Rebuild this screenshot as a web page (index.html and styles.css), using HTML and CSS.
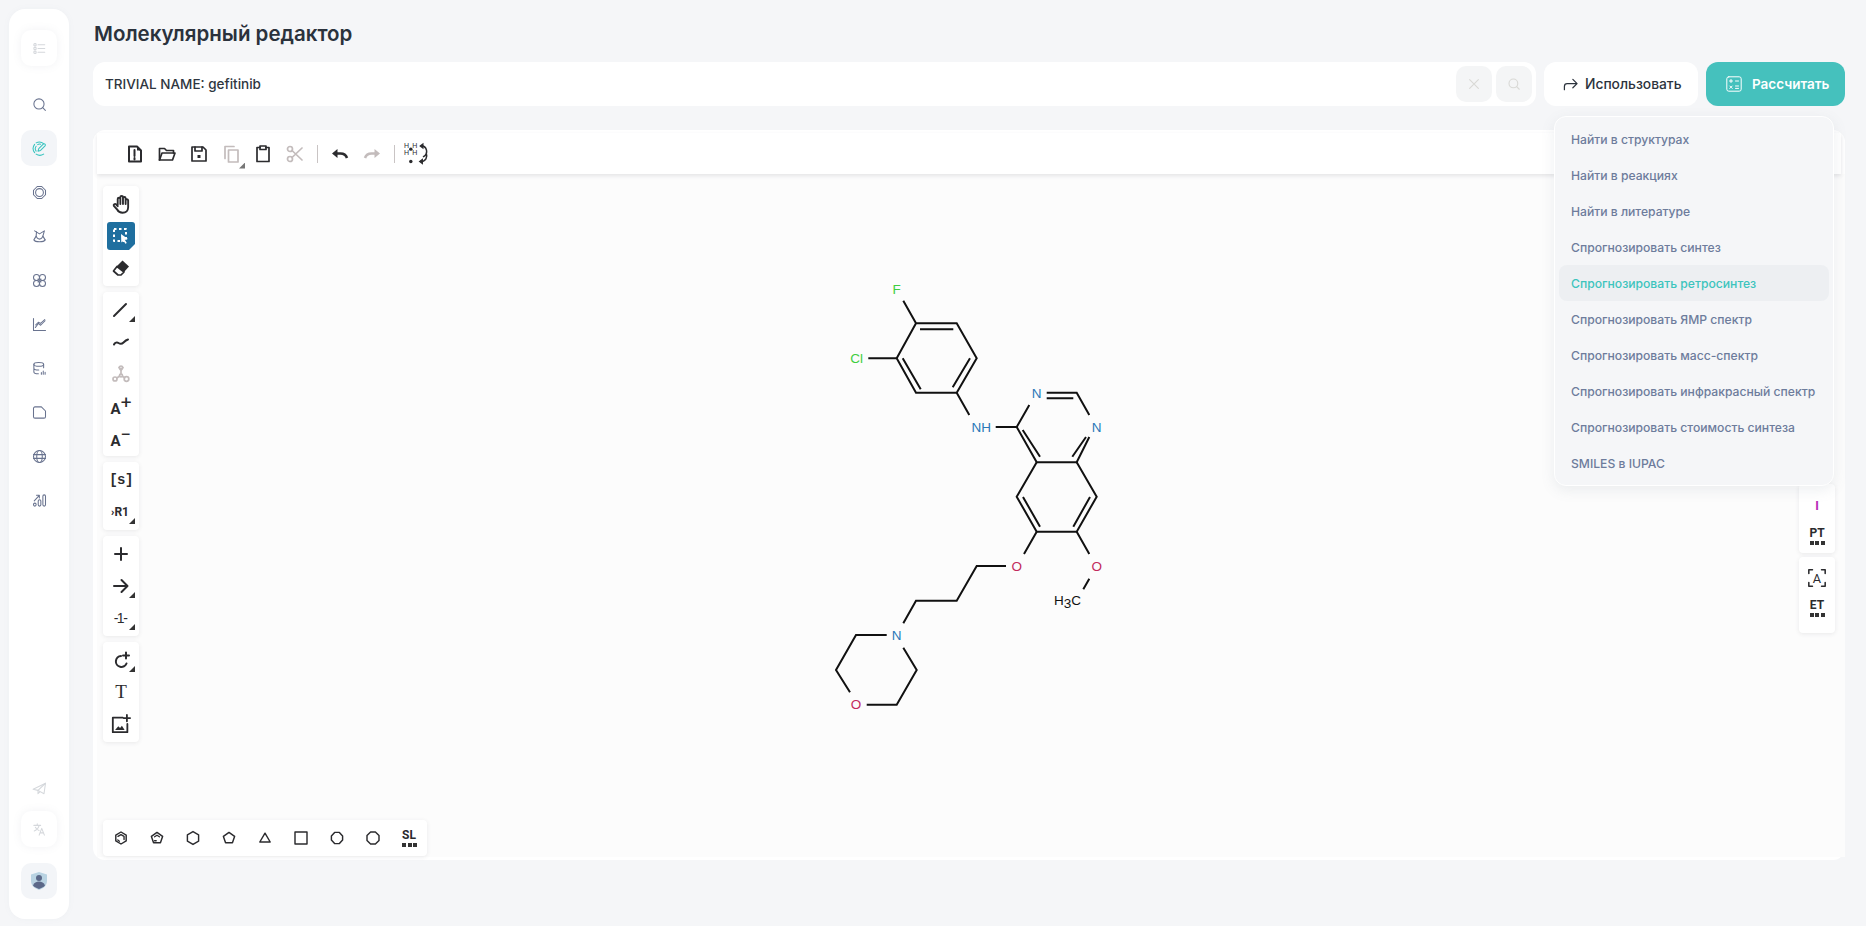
FILE: index.html
```html
<!DOCTYPE html>
<html lang="ru">
<head>
<meta charset="utf-8">
<title>Молекулярный редактор</title>
<link rel="stylesheet" href="styles.css">
</head>
<body>
<div class="app">
  <nav class="sidebar">
    <button class="nav-btn raised faded">
      <svg viewBox="0 0 20 20"><path d="M8 5h9M8 10h9M8 15h9"/><rect x="2.500" y="3.500" width="3" height="3" rx="1"/><rect x="2.500" y="8.500" width="3" height="3" rx="1"/><rect x="2.500" y="13.500" width="3" height="3" rx="1"/></svg>
    </button>
    <div class="nav-list">
      <button class="nav-btn"><svg viewBox="0 0 20 20"><circle cx="9.300" cy="9.300" r="6.800"/><path d="M14.300 14.300l3.500 3.500"/></svg></button>
      <button class="nav-btn active"><svg viewBox="0 0 20 20"><path d="M15.500 3.500A9 9 0 0 0 5.500 2.500M3.500 4.500a9 9 0 0 0 0 11M5.500 17.500a9 9 0 0 0 10 0M5.500 7a5.500 5.500 0 0 0 0 6.500M7.500 4.800a5.500 5.500 0 0 1 4-.5"/><path d="M8 13.500l1-3.300 6-6a1.700 1.700 0 0 1 2.400 2.400l-6 6z"/></svg></button>
      <button class="nav-btn"><svg viewBox="0 0 20 20"><path d="M7 2h6l5 5v6l-5 5H7l-5-5V7z"/><circle cx="10" cy="10" r="5.200"/></svg></button>
      <button class="nav-btn"><svg viewBox="0 0 20 20"><path d="M3.500 2.500l6.500 4 6.500-4-2 7 3 5"/><path d="M6 3.800L5.500 9.500 2.500 14.500c2 3.500 13 3.500 15 0"/><path d="M5.500 9.500c1 2.500 3 4 4.500 4s3.500-1.500 4.500-4"/></svg></button>
      <button class="nav-btn"><svg viewBox="0 0 20 20"><circle cx="6" cy="6" r="4"/><circle cx="14" cy="6" r="4"/><circle cx="6" cy="14" r="4"/><circle cx="14" cy="14" r="4"/><path d="M8 8l4 4M12 8l-4 4"/></svg></button>
      <button class="nav-btn"><svg viewBox="0 0 20 20"><path d="M2 2v16h16"/><path d="M4.500 14l4-5.500 3 2.500L17.500 5"/><path d="M5 10.500l3.500-3.500 3 1.500L17 3.500"/></svg></button>
      <button class="nav-btn"><svg viewBox="0 0 20 20"><ellipse cx="9" cy="4.500" rx="6.500" ry="2.500"/><path d="M2.500 4.500v10c0 1.400 2.500 2.500 6 2.500M15.500 4.500V9M2.500 9.500c0 1.400 2.500 2.500 6.500 2.500"/><path d="M12.500 17.500v-2M15 17.500v-4M17.500 17.500v-2.500"/></svg></button>
      <button class="nav-btn"><svg viewBox="0 0 20 20"><path d="M12.500 2.500H4a2 2 0 0 0-2 2v11a2 2 0 0 0 2 2h12a2 2 0 0 0 2-2V8z"/></svg></button>
      <button class="nav-btn"><svg viewBox="0 0 20 20"><circle cx="10" cy="10" r="8"/><ellipse cx="10" cy="10" rx="3.700" ry="8"/><path d="M2 7.500h16M2 12.500h16"/></svg></button>
      <button class="nav-btn"><svg viewBox="0 0 20 20"><rect x="14.500" y="2.500" width="3.500" height="15" rx="1.700"/><rect x="8.300" y="9" width="3.500" height="8.500" rx="1.700"/><rect x="2" y="13.500" width="3.500" height="4" rx="1.700"/><path d="M3 10.500L9.500 3.500M6 3h3.800v3.500"/></svg></button>
    </div>
    <div class="nav-foot">
      <button class="nav-btn faded"><svg viewBox="0 0 20 20"><path d="M1.500 11L18 3l-2 14-8-4.500zM8 12.500V17l2.500-2.500"/><path d="M8 12.500L18 3"/></svg></button>
      <button class="nav-btn raised faded"><svg viewBox="0 0 20 20"><path d="M2.500 4.500h9M7 2.500v2M9.500 4.500c-.800 3.500-3 6-6.500 7.500M4.500 7c1 2 3 3.500 5 4.500M9.500 17.500l3.500-9 3.500 9M11 14.500h4.500"/></svg></button>
      <button class="nav-btn soft">
        <svg class="avatar" viewBox="0 0 20 20"><path class="shield" d="M10 1l8 2.500V10c0 4.500-3.500 7.500-8 9-4.500-1.500-8-4.500-8-9V3.500z"/><circle class="person" cx="10" cy="7" r="3"/><path class="person" d="M4 14.500c1-3 3.500-4 6-4s5 1 6 4c-1.500 1.700-3.500 2.700-6 3.500-2.500-.800-4.500-1.800-6-3.500z"/></svg>
      </button>
    </div>
  </nav>

  <main class="main">
    <h1 class="title">Молекулярный редактор</h1>
    <div class="search-row">
      <div class="search-box">
        <span class="query">TRIVIAL NAME: gefitinib</span>
        <button class="square-btn"><svg viewBox="0 0 16 16"><path d="M3 3l10 10M13 3L3 13"/></svg></button>
        <button class="square-btn"><svg viewBox="0 0 16 16"><circle cx="7.300" cy="7.300" r="5"/><path d="M11 11l3 3"/></svg></button>
      </div>
      <button class="action use">
        <svg viewBox="0 0 16 16"><path d="M1.500 13.500V10a3 3 0 0 1 3-3h10M10.500 2.500l4.500 4.500-4.500 4.500"/></svg>
        Использовать
      </button>
      <div class="calc-wrap">
        <button class="action calc">
          <svg viewBox="0 0 16 16"><rect x=".8" y=".8" width="14.400" height="14.400" rx="2"/><path d="M3.500 5h3M5 3.500v3M9.500 5h3M3.800 10l2.400 2.400M6.200 10l-2.400 2.400M9.500 10h3M9.500 12.400h3"/></svg>
          Рассчитать
        </button>
        <ul class="menu">
          <li class="menu-item">Найти в структурах</li>
          <li class="menu-item">Найти в реакциях</li>
          <li class="menu-item">Найти в литературе</li>
          <li class="menu-item">Спрогнозировать синтез</li>
          <li class="menu-item current">Спрогнозировать ретросинтез</li>
          <li class="menu-item">Спрогнозировать ЯМР спектр</li>
          <li class="menu-item">Спрогнозировать масс-спектр</li>
          <li class="menu-item">Спрогнозировать инфракрасный спектр</li>
          <li class="menu-item">Спрогнозировать стоимость синтеза</li>
          <li class="menu-item">SMILES в IUPAC</li>
        </ul>
      </div>
    </div>

    <section class="editor">
      <div class="topbar">
        <button class="tool"><svg viewBox="0 0 20 20"><path class="bold" d="M4 2.500h8l4 4v11H4z"/><path class="bold" d="M9.500 6v6M9.500 14v1.500"/><path class="fill" d="M12 2.500l4 4h-4z"/></svg></button>
        <button class="tool"><svg viewBox="0 0 20 20"><path d="M2.500 16V4.500h5l2 2h7V9"/><path d="M2.500 16l2.500-7h13l-2.500 7z"/></svg></button>
        <button class="tool"><svg viewBox="0 0 20 20"><path d="M3 3h11l3 3v11H3z"/><path d="M6 3v4h7V3"/><path class="fill" d="M8.500 11h3v3h-3z"/></svg></button>
        <button class="tool off"><svg viewBox="0 0 20 20"><path d="M7.500 6h9.500v12H7.500z"/><path d="M4 14.500V2.500h9"/></svg><i class="tri"></i></button>
        <button class="tool"><svg viewBox="0 0 20 20"><path d="M7 3.500H4v14h12v-14h-3"/><path d="M7 2h6v3.500H7z"/></svg></button>
        <button class="tool off"><svg viewBox="0 0 20 20"><circle cx="5" cy="5" r="2.500"/><circle cx="5" cy="15" r="2.500"/><path d="M7 6.500L17 16M7 13.500L17 4"/></svg></button>
        <span class="sep"></span>
        <button class="tool"><svg viewBox="0 0 20 20"><path class="heavy" d="M17 14c-1-3-3.500-4.500-6.500-4.500H5"/><path class="fill" d="M7.500 5v9L2 9.500z"/></svg></button>
        <button class="tool off"><svg viewBox="0 0 20 20"><path class="heavy" d="M3 14c1-3 3.500-4.500 6.500-4.500H15"/><path class="fill" d="M12.500 5v9L18 9.500z"/></svg></button>
        <span class="sep"></span>
        <button class="tool wide">
          <svg viewBox="0 0 24 24"><g class="mini"><text x="0" y="6">H</text><text x="7.500" y="6">H</text><text x="0" y="13">H</text><text x="7.500" y="13">H</text></g><circle class="fill" cx="6.300" cy="7.500" r="1.600"/><circle class="fill" cx="6.300" cy="19" r="1.600"/><path d="M16 4.500c5 0 7 7 2 10M15.500 19c4.500 0 6.500-4 5-8"/><path class="fill" d="M14 4.500l4-3v6zM13.500 19l4-3v6z"/></svg>
        </button>
      </div>

      <div class="canvas">
        <svg class="molecule" viewBox="820 270 300 450">
          <g class="bonds">
            <path d="M903.300 300.700L916 323.300H956.700L976.700 358.300L956.700 392.700H916L896.700 358.300L916 323.300"/>
            <path d="M920 329.300H953.300M902.700 358.300L920.700 389.300M952.700 387.300L970 358.300M868.300 358.300H896.700M956.700 392.700L969.300 415"/>
            <path d="M995.700 427H1016.700L1029.300 405M1046.700 392.700H1076.700L1089.300 415M1046.700 398.300H1073.300M1089.300 437L1076.700 462.300H1036.700L1016.700 427M1022.700 430L1040 456.700M1072.300 456.700L1086 437"/>
            <path d="M1036.700 462.300L1016.700 496.700L1036.700 531.700H1076.700L1096.700 496.700L1076.700 462.300M1023 497L1040 526.700M1090 497L1073.300 526.700"/>
            <path d="M1036.700 531.700L1024 554M1076.700 531.700L1089.300 554M1089.300 578.700L1083.300 589.300"/>
            <path d="M1006 566H976.700L956.700 600.700H916L903.300 623.300M886.700 635H856L836 670L850 692.300M866.700 704.700H896.700L916.700 670L903.300 647.700"/>
          </g>
          <g class="atoms">
            <text class="halo" x="896.700" y="294">F</text>
            <text class="halo" x="856.700" y="363">Cl</text>
            <text class="nitro" x="981.300" y="432">NH</text>
            <text class="nitro" x="1036.700" y="398">N</text>
            <text class="nitro" x="1096.700" y="432">N</text>
            <text class="oxy" x="1016.700" y="571">O</text>
            <text class="oxy" x="1096.700" y="571">O</text>
            <text class="nitro" x="896.700" y="640">N</text>
            <text class="oxy" x="856" y="709">O</text>
            <text class="carbon" x="1067.500" y="605">H<tspan dy="3">3</tspan><tspan dy="-3">C</tspan></text>
          </g>
        </svg>

        <div class="left-tools">
          <div class="group">
            <button class="tool big"><svg viewBox="0 0 20 20"><path d="M7 11V5.500a1.200 1.200 0 0 1 2.400 0V10M9.400 10V3.800a1.200 1.200 0 0 1 2.400 0V10M11.800 10V4.800a1.200 1.200 0 0 1 2.400 0V10M14.200 10V6.500a1.200 1.200 0 0 1 2.300 0v6.500c0 3-2 5-5 5-2.500 0-4-1-5-3L3.500 11.800c-.7-1.300 1-2.500 2-1.500L7 12"/></svg></button>
            <button class="tool selected"><svg viewBox="0 0 20 20"><path class="dash" d="M3 3h12v12H3z"/><path class="whitefill" d="M10 8l7 5-3.200.8 2 3.200-1.500.8-1.800-3.200-2.200 2z"/></svg><i class="tri light"></i></button>
            <button class="tool"><svg viewBox="0 0 20 20"><path class="fill" d="M11.500 2.500l6.500 6-5 5.500-7-6z"/><path d="M6 8.500l7 5.500-3 3H7l-4.500-4z"/></svg></button>
          </div>
          <div class="group">
            <button class="tool"><svg viewBox="0 0 20 20"><path class="bold" d="M3 16L15 4"/></svg><i class="tri"></i></button>
            <button class="tool"><svg viewBox="0 0 20 20"><path class="bold" d="M3 12.500c1-2 3-2.500 4.500-1.500S11 12 12.500 10.500 15 8 17 7.500"/></svg></button>
            <button class="tool off"><svg viewBox="0 0 20 20"><circle cx="10" cy="3.500" r="1.500"/><circle cx="4" cy="15" r="2"/><circle cx="15.500" cy="15" r="2.300"/><circle cx="10" cy="11.500" r="1.500"/><path d="M10 5v5M5.800 14l3-2M11.300 12.300l2.400 1.500M8 3.500l2 3 2-3"/></svg></button>
            <button class="tool letter">A<sup class="sign">+</sup></button>
            <button class="tool letter">A<sup class="sign">−</sup></button>
          </div>
          <div class="group">
            <button class="tool bracket">[s]</button>
            <button class="tool rgroup"><span class="mini-arrow">›</span>R1<i class="tri"></i></button>
          </div>
          <div class="group">
            <button class="tool"><svg viewBox="0 0 20 20"><path class="bold" d="M10 4v12M4 10h12"/></svg></button>
            <button class="tool"><svg viewBox="0 0 20 20"><path class="bold" d="M3 10h13M10.500 4l6 6-6 6"/></svg><i class="tri"></i></button>
            <button class="tool numbered">-1-<i class="tri"></i></button>
          </div>
          <div class="group">
            <button class="tool"><svg viewBox="0 0 20 20"><path class="bold" d="M10 6a5.500 5.500 0 1 0 5.500 7.500M15 2.500v6M12 5.500h6"/></svg><i class="tri"></i></button>
            <button class="tool serif">T</button>
            <button class="tool"><svg viewBox="0 0 22 22"><path class="bold" d="M13 4H2v16h16v-9"/><path class="fill" d="M4.500 17.500l3.500-4 2 2 2-2.500 3 4.500z"/><path class="bold" d="M17.500 1v7M14 4.500h7"/></svg></button>
          </div>
        </div>

        <div class="bottom-tools">
          <button class="tool"><svg viewBox="0 0 20 20"><path class="ring" d="M10 2.500l6.500 3.800v7.400L10 17.500l-6.500-3.800V6.300z"/><path d="M6.200 8l3.800-2.200 3.800 2.200M13.800 8v4M6 12.500l2 1.500"/></svg></button>
          <button class="tool"><svg viewBox="0 0 20 20"><path class="ring" d="M10 3l7 5-2.700 8H5.700L3 8z"/><path d="M7 8.500L10 6.500l3 2M7 13.500h2"/></svg></button>
          <button class="tool"><svg viewBox="0 0 20 20"><path class="ring" d="M10 2l7 4v8l-7 4-7-4V6z"/></svg></button>
          <button class="tool"><svg viewBox="0 0 20 20"><path class="ring" d="M10 3l7 5-2.700 8H5.700L3 8z"/></svg></button>
          <button class="tool"><svg viewBox="0 0 20 20"><path class="ring" d="M10 4l6.500 11h-13z"/></svg></button>
          <button class="tool"><svg viewBox="0 0 20 20"><path class="ring" d="M2.500 2.500h15v15h-15z"/></svg></button>
          <button class="tool"><svg viewBox="0 0 20 20"><path class="ring" d="M7 3h6l4 4.500v5L13 17H7l-4-4.500v-5z"/></svg></button>
          <button class="tool"><svg viewBox="0 0 20 20"><path class="ring" d="M7 2.500h6L17.500 7v6L13 17.500H7L2.500 13V7z"/></svg></button>
          <button class="tool dotted"><span>SL</span><i class="dots"></i></button>
        </div>

        <div class="right-tools">
          <div class="group end">
            <button class="tool iodine">I</button>
            <button class="tool dotted"><span>PT</span><i class="dots"></i></button>
          </div>
          <div class="group spaced">
            <button class="tool"><svg viewBox="0 0 22 22"><path d="M2 6V2h4M16 2h4v4M2 16v4h4M16 20h4v-4"/><text class="ext-a" x="11" y="16.500">A</text></svg></button>
            <button class="tool dotted"><span>ET</span><i class="dots"></i></button>
          </div>
        </div>
      </div>
    </section>
  </main>
</div>
</body>
</html>
```

FILE: styles.css
```css
* { box-sizing: border-box; }
html, body { margin: 0; height: 100%; }
body {
  background: #f5f6f8;
  font-family: Inter, "Noto Sans", sans-serif;
  color: #2c333d;
  overflow: hidden;
}
button {
  border: 0;
  background: none;
  padding: 0;
  font-family: inherit;
  color: inherit;
}
svg { display: block; fill: none; stroke: currentColor; stroke-linecap: round; stroke-linejoin: round; }

.app { display: flex; height: 926px; }

/* sidebar */
.sidebar {
  width: 60px;
  margin: 9px 0 7px 9px;
  padding: 21px 0 20px;
  background: #fff;
  border-radius: 16px;
  display: flex;
  flex-direction: column;
  align-items: center;
  box-shadow: 0 0 6px rgba(120, 130, 150, .05);
}
.nav-list { display: flex; flex-direction: column; gap: 8px; margin-top: 20px; }
.nav-foot { margin-top: auto; display: flex; flex-direction: column; align-items: center; }
.nav-btn {
  width: 36px;
  height: 36px;
  border-radius: 10px;
  display: flex;
  align-items: center;
  justify-content: center;
  color: #69738f;
}
.nav-btn svg { width: 15px; height: 15px; stroke-width: 1.400; }
.nav-btn.active { background: #f3f5f8; color: #39c4bf; }
.nav-btn.raised { box-shadow: 0 0 8px rgba(120, 130, 150, .10); }
.nav-btn.faded { color: #d5d8dc; }
.nav-foot .nav-btn + .nav-btn { margin-top: 5px; }
.nav-btn.soft { background: #f3f5f8; margin-top: 16px !important; }
.nav-btn .avatar { width: 20px; height: 20px; stroke: none; }
.shield { fill: #b9d3e2; }
.person { fill: #5b6888; }

/* main */
.main { flex: 1; min-width: 0; padding: 22px 21px 0 24px; }
.title { margin: 0 0 16px 1px; font-size: 20.500px; line-height: 24px; font-weight: 600; color: #2b323c; }
.search-row { display: flex; gap: 8px; height: 44px; margin-bottom: 24px; }
.search-box {
  flex: 1;
  display: flex;
  align-items: center;
  gap: 4px;
  padding: 0 4px 0 12px;
  background: #fff;
  border-radius: 12px;
}
.query { flex: 1; font-size: 13.500px; font-weight: 500; color: #2f3640; }
.square-btn {
  width: 36px;
  height: 36px;
  background: #f4f5f6;
  border-radius: 10px;
  display: flex;
  align-items: center;
  justify-content: center;
  color: #d9d9d6;
}
.square-btn svg { width: 14px; height: 14px; stroke-width: 1.300; }
.action {
  height: 44px;
  border-radius: 12px;
  display: flex;
  align-items: center;
  font-size: 13.800px;
  font-weight: 500;
}
.use { width: 154px; background: #fff; padding-left: 19px; gap: 7px; color: #2c333d; }
.use svg { width: 15px; height: 15px; stroke-width: 1.300; }
.calc-wrap { position: relative; width: 139px; }
.calc { width: 139px; background: #45c1bd; color: #fff; padding-left: 20px; gap: 10px; font-size: 13.500px; font-weight: 600; }
.calc svg { width: 16px; height: 16px; stroke-width: 1; }

.menu {
  position: absolute;
  z-index: 5;
  top: 54px;
  right: 11px;
  width: 280px;
  margin: 0;
  padding: 4px;
  list-style: none;
  background: #f5f6f8;
  border: 1px solid #fff;
  border-radius: 12px;
  box-shadow: 0 4px 14px rgba(110, 120, 140, .12);
}
.menu-item {
  height: 36px;
  padding-left: 12px;
  display: flex;
  align-items: center;
  border-radius: 8px;
  font-size: 12.150px;
  font-weight: 500;
  color: #6d7c9c;
  white-space: nowrap;
}
.menu-item.current { background: #edeff2; color: #3cc4bd; }

/* editor */
.editor {
  height: 730px;
  padding: 3px 4px;
  background: #fff;
  border-radius: 12px;
  display: flex;
  flex-direction: column;
}
.topbar {
  height: 41px;
  flex: none;
  display: flex;
  align-items: center;
  padding-left: 22px;
  background: #fff;
  box-shadow: 0 2px 4px rgba(60, 60, 70, .12);
  position: relative;
  z-index: 1;
  color: #333;
}
.tool {
  position: relative;
  width: 32px;
  height: 32px;
  flex: none;
  display: flex;
  align-items: center;
  justify-content: center;
  color: #2b2b2e;
}
.tool svg { width: 20px; height: 20px; stroke-width: 1.700; }
.tool.big svg { width: 22px; height: 22px; }
.tool.wide svg { width: 26px; height: 26px; stroke-width: 1.400; }
.tool.off { color: #c3bcbc; }
.sep { width: 1px; height: 18px; background: #c9c4c4; margin: 0 6px; flex: none; }
.tri {
  position: absolute;
  right: 2px;
  bottom: 4px;
  width: 6px;
  height: 6px;
  background: #333;
  clip-path: polygon(100% 0, 100% 100%, 0 100%);
}
.topbar .off .tri { right: 2px; bottom: 1px; background: #777; }
.tri.light { background: #fff; right: 0; bottom: 0; }
.bold { stroke-width: 2; }
.heavy { stroke-width: 2.600; stroke-linecap: butt; }
.fill { fill: currentColor; stroke: none; }
.whitefill { fill: #fff; stroke: none; }
.dash { stroke-dasharray: 2.500 2.500; stroke-width: 2; stroke-linecap: butt; }
.ring { stroke-width: 1.800; }
.mini text { font: 6.500px "Liberation Sans", sans-serif; fill: currentColor; stroke: none; }

.canvas { position: relative; flex: 1; background: #fcfcfc; margin-right: -4px; }
.molecule { position: absolute; left: 723px; top: 96px; width: 300px; height: 450px; }
.bonds path { stroke: #111; stroke-width: 2; stroke-linecap: butt; stroke-linejoin: miter; }
.atoms text { font: 13.500px "Liberation Sans", sans-serif; text-anchor: middle; stroke: none; }
.halo { fill: #3fce40; }
.nitro { fill: #2a78b8; }
.oxy { fill: #c22a5c; }
.carbon { fill: #111; }

.group {
  padding: 2px;
  background: #fff;
  border-radius: 4px;
  box-shadow: 0 1px 4px rgba(70, 70, 80, .10);
  display: flex;
  flex-direction: column;
}
.left-tools { position: absolute; left: 6px; top: 12px; width: 36px; display: flex; flex-direction: column; gap: 6px; }
.selected { background: #1f6f9f; color: #fff; width: 28px; height: 28px; margin: 2px; border-radius: 3px; }
.selected svg { width: 20px; height: 20px; }
.letter { font: 700 15px Roboto, sans-serif; padding-top: 5px; }
.sign { font-size: 19px; font-weight: 400; line-height: 0; margin-top: -12px; }
.bracket { font: 700 14px "Liberation Mono", monospace; letter-spacing: -.5px; }
.rgroup { font: 700 12px Roboto, sans-serif; padding-right: 2px; }
.mini-arrow { font-size: 11px; font-weight: 900; }
.numbered { font: 500 14px "Liberation Sans", sans-serif; letter-spacing: -1.500px; padding-right: 2px; }
.serif { font: 400 19px "Liberation Serif", serif; }

.bottom-tools {
  position: absolute;
  left: 6px;
  bottom: 1px;
  height: 36px;
  background: #fff;
  border-radius: 4px;
  box-shadow: 0 1px 4px rgba(70, 70, 80, .10);
  display: flex;
  align-items: center;
}
.bottom-tools .tool { width: 36px; }
.bottom-tools .tool svg { width: 16px; height: 16px; }
.dotted { flex-direction: column; font: 700 12px Roboto, sans-serif; line-height: 11px; }
.dots {
  display: block;
  width: 15px;
  height: 4px;
  margin-top: 2px;
  background: repeating-linear-gradient(90deg, #333 0 4px, transparent 4px 5.500px);
}
.right-tools { position: absolute; right: 10px; top: 310px; width: 36px; display: flex; flex-direction: column; gap: 4px; }
.right-tools .group { padding: 0; }
.right-tools .group.end { height: 69px; justify-content: flex-end; padding-bottom: 1px; }
.right-tools .group.spaced { height: 76px; padding-top: 5px; }
.right-tools .tool { width: 36px; height: 31px; }
.iodine { font: 700 13px "Liberation Sans", sans-serif; color: #b92fb9; }
.ext-a { font: 400 14px Roboto, sans-serif; text-anchor: middle; fill: currentColor; stroke: none; }
```
